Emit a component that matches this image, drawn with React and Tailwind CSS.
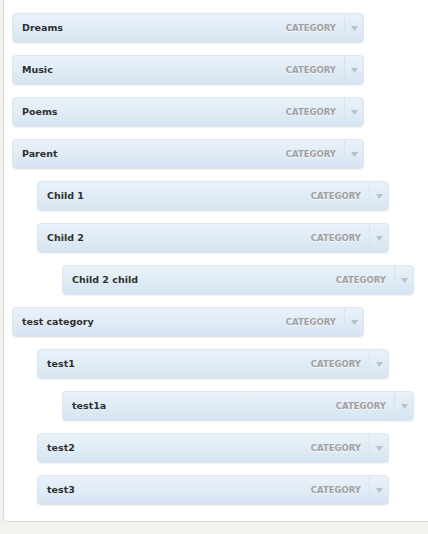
import React from 'react';

const categories = [
  { name: 'Dreams', level: 0 },
  { name: 'Music', level: 0 },
  { name: 'Poems', level: 0 },
  { name: 'Parent', level: 0 },
  { name: 'Child 1', level: 1 },
  { name: 'Child 2', level: 1 },
  { name: 'Child 2 child', level: 2 },
  { name: 'test category', level: 0 },
  { name: 'test1', level: 1 },
  { name: 'test1a', level: 2 },
  { name: 'test2', level: 1 },
  { name: 'test3', level: 1 },
];

const indent = ['ml-0', 'ml-[25px]', 'ml-[50px]'];

function CategoryRow({ name, level }) {
  return (
    <div
      className={`${indent[level]} flex h-[30px] w-[352px] items-stretch rounded-[4px] border border-[#dae5ef] bg-gradient-to-b from-[#eaf2fa] to-[#d6e5f2] shadow-[0_1px_1px_rgba(0,0,0,0.05)]`}
    >
      <div className="flex flex-1 items-center pl-[9px] text-[9.5px] font-bold text-[#2f2f2f]">
        {name}
      </div>
      <div className="flex items-center pr-[8px] text-[8.5px] font-bold text-[#a0a0a0] [text-shadow:0_1px_0_rgba(255,255,255,0.7)]">
        CATEGORY
      </div>
      <div className="flex w-[19px] items-center justify-center border-l border-[#d8e3ed]">
        <svg width="7" height="5" viewBox="0 0 7 5">
          <polygon points="0,0 7,0 3.5,5" fill="#b8c0c8" />
        </svg>
      </div>
    </div>
  );
}

export default function App() {
  return (
    <div
      className="h-[534px] w-[428px] bg-[#f3f3ee] pl-[3px]"
      style={{ fontFamily: '"DejaVu Sans", Verdana, sans-serif' }}
    >
      <div className="flex h-[522px] w-[432px] flex-col gap-[12px] rounded-bl-[5px] border-b border-l border-[#dcdcd6] bg-white pl-[8px] pt-[13px]">
        {categories.map((c) => (
          <CategoryRow key={c.name} name={c.name} level={c.level} />
        ))}
      </div>
    </div>
  );
}
